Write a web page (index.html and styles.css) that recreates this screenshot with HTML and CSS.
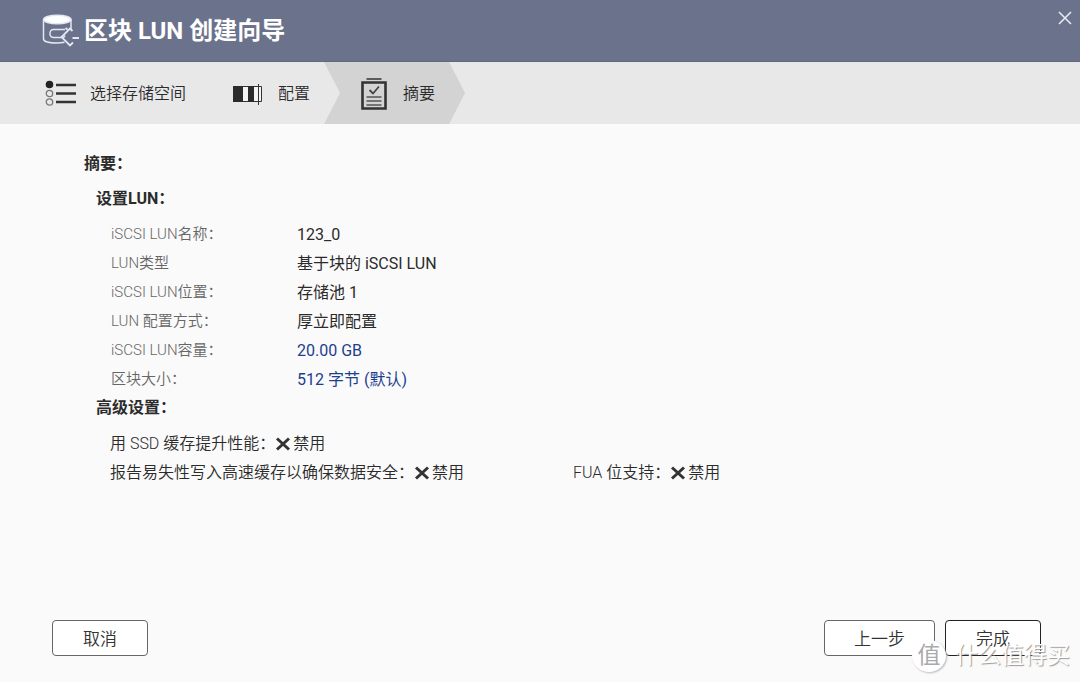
FILE: index.html
```html
<!DOCTYPE html>
<html lang="zh-CN">
<head>
<meta charset="utf-8">
<title>区块 LUN 创建向导</title>
<link rel="stylesheet" href="styles.css">
</head>
<body>
<div class="wizard">
  <header class="titlebar">
    <svg class="title-icon" width="38" height="34" viewBox="0 0 38 34" fill="none" stroke="#e4e7f2" stroke-width="1.500">
      <path d="M1.500 6v19c0 2.500 6 4 13 4 3 0 6-.3 8-.8M29 6v9"/>
      <ellipse cx="15.300" cy="5.500" rx="13.800" ry="4.300" fill="#fff"/>
      <path d="M23 15.500H11.500a3.500 3.500 0 0 0-3.500 3.500v1a3.500 3.500 0 0 0 3.500 3.500H20M20 23.500a3 3 0 0 0 3-2"/>
      <path d="M30.500 17 28 14.500 19.500 23l8.500 8.500 3-3M25.500 15.500l-2-1.500M30.500 24H37" stroke-width="1.800"/>
    </svg>
    <h1 class="title">区块 LUN 创建向导</h1>
    <button class="close" type="button" aria-label="关闭">
      <svg width="14" height="14" viewBox="0 0 14 14" stroke="#e6e9f3" stroke-width="1.600"><path d="M1 1l12 12M13 1 1 13"/></svg>
    </button>
  </header>

  <ol class="steps">
    <li class="step">
      <svg width="32" height="28" viewBox="0 0 32 28" fill="none" stroke="#333">
        <circle cx="4.500" cy="4.500" r="3.800" fill="#222" stroke="none"/>
        <circle cx="4.500" cy="13.500" r="3.200" stroke="#777" stroke-width="1.300"/>
        <circle cx="4.500" cy="22" r="3.200" stroke="#777" stroke-width="1.300"/>
        <path d="M11 5h20M11 13.500h20M11 22h20" stroke-width="2.400"/>
      </svg>
      <span>选择存储空间</span>
    </li>
    <li class="step step-config">
      <svg width="31" height="28" viewBox="0 0 31 28" fill="none" stroke="#333">
        <path d="M.5 6.500h28v15H.5z" fill="#f4f4f4"/>
        <path d="M0 6h10v16H0zM15 6h6v16h-6z" fill="#2b2b2b" stroke="none"/>
        <path d="M25.500 4v21"/>
      </svg>
      <span>配置</span>
    </li>
    <li class="step step-current" aria-current="step">
      <svg width="26" height="32" viewBox="0 0 26 32" fill="none" stroke="#333">
        <path d="M5.500 1h15" stroke-width="1.500"/>
        <path d="M1.500 4.500h23v26h-23z" stroke-width="2.600"/>
        <path d="M5.500 19h15M5.500 23h15M5.500 27h15" stroke="#555" stroke-width="1.500"/>
        <path d="m8.500 12 3.500 3.500 6-7" stroke="#444" stroke-width="1.800"/>
      </svg>
      <span>摘要</span>
    </li>
  </ol>

  <main class="content">
    <h2 class="heading">摘要：</h2>
    <section class="group">
      <h3 class="heading">设置LUN：</h3>
      <dl class="details">
        <dt>iSCSI LUN名称：</dt><dd>123_0</dd>
        <dt>LUN类型</dt><dd>基于块的 iSCSI LUN</dd>
        <dt>iSCSI LUN位置：</dt><dd>存储池 1</dd>
        <dt>LUN 配置方式：</dt><dd>厚立即配置</dd>
        <dt>iSCSI LUN容量：</dt><dd class="accent">20.00 GB</dd>
        <dt>区块大小：</dt><dd class="accent">512 字节 (默认)</dd>
      </dl>
      <h3 class="heading">高级设置：</h3>
      <div class="options">
        <p class="option">用 SSD 缓存提升性能：
          <svg class="cross" width="16" height="14" viewBox="0 0 16 14"><path d="M2 1.500l12 11M14 1.500l-12 11"/></svg>禁用</p>
        <p class="option">报告易失性写入高速缓存以确保数据安全：
          <svg class="cross" width="16" height="14" viewBox="0 0 16 14"><path d="M2 1.500l12 11M14 1.500l-12 11"/></svg>禁用</p>
        <p class="option">FUA 位支持：
          <svg class="cross" width="16" height="14" viewBox="0 0 16 14"><path d="M2 1.500l12 11M14 1.500l-12 11"/></svg>禁用</p>
      </div>
    </section>
  </main>

  <footer class="actions">
    <button class="btn" type="button">取消</button>
    <button class="btn btn-back" type="button">上一步</button>
    <button class="btn btn-primary" type="button">完成</button>
  </footer>

  <div class="watermark"><span class="seal">值</span><span>什么值得买</span></div>
</div>
</body>
</html>
```
FILE: styles.css
```css
* {
  box-sizing: border-box;
}

body {
  margin: 0;
  font-family: Roboto, "Noto Sans CJK SC", sans-serif;
  font-size: 16px;
  font-weight: 350;
  line-height: 24px;
  color: #2b2b2b;
  background: #fafafa;
}

h1, h2, h3, p, dl, dd, ol {
  margin: 0;
  padding: 0;
}

svg {
  display: block;
  flex: none;
}

.wizard {
  position: relative;
  display: flex;
  flex-direction: column;
  min-height: 100vh;
}

.titlebar {
  display: flex;
  align-items: center;
  height: 62px;
  padding: 0 8px 0 42px;
  background: #6b728c;
  border-bottom: 1px solid #62687f;
}

.title {
  flex: 1;
  margin-left: 4px;
  font-size: 24px;
  font-weight: 700;
  line-height: 32px;
  color: #fff;
}

.close {
  align-self: flex-start;
  margin-top: 11px;
  padding: 0;
  border: 0;
  background: none;
}

.steps {
  display: flex;
  height: 62px;
  list-style: none;
  background: #e8e8e8;
}

.step {
  display: flex;
  align-items: center;
  gap: 13px;
  padding: 2px 2px 0 45px;
}

.step-config {
  gap: 14px;
  padding: 2px 14px 0 45px;
}

.step-current {
  gap: 16px;
  padding: 2px 30px 0 37px;
  background: #d3d3d3;
  clip-path: polygon(0 0, calc(100% - 16px) 0, 100% 50%, calc(100% - 16px) 100%, 0 100%, 16px 50%);
}

.content {
  flex: 1;
  padding: 28px 40px 0 84px;
}

.heading {
  font-size: 16px;
  font-weight: 700;
}

.group {
  margin-top: 11px;
  padding-left: 12px;
}

.details {
  display: grid;
  grid-template-columns: 186px 1fr;
  margin: 9px 0 2px;
  padding-left: 15px;
  line-height: 29px;
}

.details dt {
  font-size: 15px;
  color: #666;
}

.details dd {
  font-weight: 400;
}

.details .accent {
  color: #1c3f8f;
}

.options {
  display: grid;
  grid-template-columns: 463px 1fr;
  margin-top: 9px;
  padding-left: 14px;
  line-height: 29px;
}

.option {
  display: flex;
  align-items: center;
}

.option:first-child {
  grid-column: 1 / -1;
}

.cross {
  margin: 0 2px 0 0;
  stroke: #333;
  stroke-width: 3;
}

.actions {
  display: flex;
  gap: 10px;
  padding: 0 39px 26px 52px;
}

.btn {
  width: 96px;
  height: 36px;
  padding: 2px 0 0;
  font: inherit;
  font-size: 17px;
  color: #333;
  background: #fff;
  border: 1px solid #666;
  border-radius: 4px;
}

.btn-back {
  width: 111px;
  margin-left: auto;
}

.btn-primary {
  border-color: #222;
}

.watermark {
  position: absolute;
  right: 10px;
  bottom: 10px;
  display: flex;
  align-items: center;
  gap: 9px;
  font-size: 23px;
  line-height: 32px;
  font-weight: 400;
  color: #fff;
  text-shadow: 1px 1px 1px #999;
  pointer-events: none;
}

.seal {
  width: 34px;
  height: 32px;
  border-radius: 50%;
  text-align: center;
  color: #aaa;
  background: #fff;
  box-shadow: 1px 1px 2px #bbb;
  text-shadow: none;
}
```
